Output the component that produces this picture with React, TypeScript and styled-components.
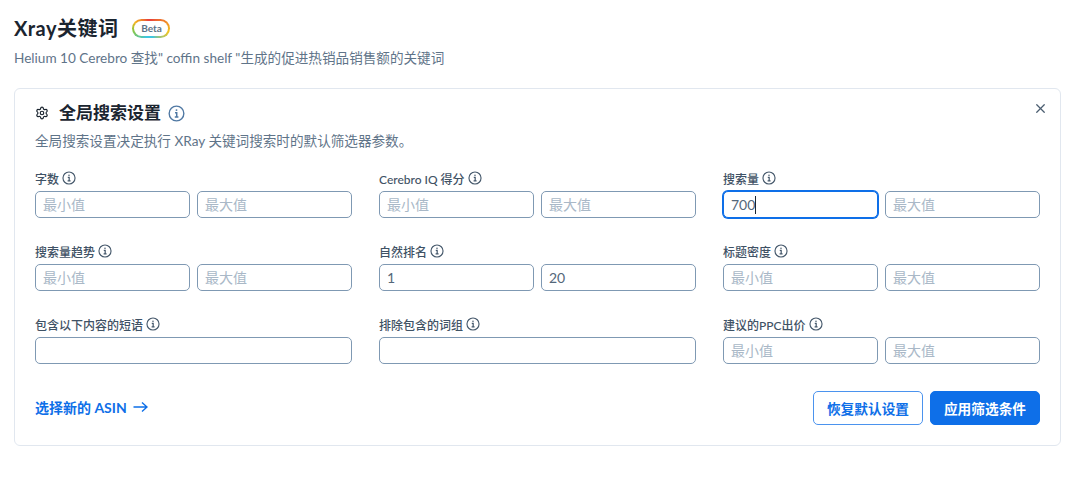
import styled, { createGlobalStyle } from "styled-components";
import { Settings, X } from "lucide-react";

const GlobalStyle = createGlobalStyle`
  * { box-sizing: border-box; }
  body {
    margin: 0;
    background: #fff;
    font-family: Lato, "Noto Sans CJK SC", sans-serif;
  }
`;

const Page = styled.div`
  width: 1080px;
  height: 486px;
  padding: 14px 19px 0 14px;
`;

const TitleRow = styled.div`
  display: flex;
  align-items: center;
  gap: 14px;
  height: 28px;
`;

const Title = styled.h1`
  margin: 0;
  font-size: 20px;
  line-height: 28px;
  font-weight: 700;
  letter-spacing: 0.5px;
  color: #1b2530;
`;

const Badge = styled.span`
  width: 38px;
  height: 19px;
  border-radius: 10px;
  padding: 2px;
  background: conic-gradient(#e8433a 0deg, #ef7d2a 60deg, #f3c41f 100deg, #3fc6e0 170deg, #3fc6e0 210deg, #8cc63f 265deg, #f3b51f 290deg, #e8433a 340deg);
  display: flex;
`;

const BadgeInner = styled.span`
  flex: 1;
  background: #fff;
  border-radius: 8px;
  font-size: 10px;
  font-weight: 700;
  line-height: 15px;
  text-align: center;
  color: #5b7288;
`;

const Subtitle = styled.p`
  margin: 6px 0 20px;
  font-size: 13.6px;
  line-height: 20px;
  color: #5f7489;
`;

const Card = styled.section`
  position: relative;
  height: 358px;
  border: 1px solid #e1e7ef;
  border-radius: 6px;
  padding: 12px 20px 0 20px;
`;

const CloseButton = styled.button`
  position: absolute;
  top: 11px;
  right: 12px;
  width: 16px;
  height: 16px;
  padding: 0;
  border: 0;
  background: none;
  color: #4a5d70;
  display: flex;
  align-items: center;
  justify-content: center;
`;

const CardHeading = styled.div`
  display: flex;
  align-items: center;
  height: 24px;
  color: #1b2530;
`;

const CardTitle = styled.h2`
  margin: 0 7px 0 10px;
  font-size: 17px;
  line-height: 24px;
  font-weight: 700;
`;

const CardNote = styled.p`
  margin: 6px 0 15px;
  font-size: 13.6px;
  line-height: 20px;
  color: #5f7489;
`;

const Grid = styled.div`
  display: grid;
  grid-template-columns: repeat(3, 317px);
  column-gap: 27px;
  row-gap: 21px;
`;

const Field = styled.div`
  display: flex;
  flex-direction: column;
`;

const Label = styled.label`
  display: flex;
  align-items: center;
  gap: 3px;
  height: 25px;
  padding-bottom: 1px;
  font-size: 12px;
  font-weight: 500;
  color: #3f5265;
`;

const Inputs = styled.div`
  display: flex;
  gap: 7px;
`;

const InputWrap = styled.div`
  position: relative;
  flex: 1;
`;

const Input = styled.input<{ $focused?: boolean }>`
  display: block;
  width: 100%;
  height: 27px;
  padding: 0 7px;
  border-radius: 5px;
  border: 1px solid ${(p) => (p.$focused ? "#0e6fe8" : "#7f99b3")};
  box-shadow: ${(p) => (p.$focused ? "0 0 0 1px #0e6fe8" : "none")};
  outline: none;
  background: #fff;
  font-family: inherit;
  font-size: 14px;
  color: #54677a;
  &::placeholder {
    color: #a9b8c7;
    opacity: 1;
  }
`;

const Caret = styled.span`
  position: absolute;
  left: 32px;
  top: 5px;
  width: 1px;
  height: 18px;
  background: #1b2530;
`;

const Footer = styled.div`
  display: flex;
  align-items: center;
  justify-content: space-between;
  margin-top: 27px;
`;

const NewAsin = styled.a`
  display: flex;
  align-items: center;
  gap: 6px;
  padding-bottom: 2px;
  font-size: 14px;
  font-weight: 700;
  color: #0e6fe8;
`;

const Actions = styled.div`
  display: flex;
  gap: 7px;
`;

const Button = styled.button<{ $primary?: boolean }>`
  width: 110px;
  height: 34px;
  padding: 0;
  border-radius: 5px;
  border: 1px solid ${(p) => (p.$primary ? "#0e6fe8" : "#4b93ee")};
  background: ${(p) => (p.$primary ? "#0e6fe8" : "#fff")};
  color: ${(p) => (p.$primary ? "#fff" : "#0e6fe8")};
  font-family: inherit;
  font-size: 13.7px;
  font-weight: 700;
`;

const InfoIcon = ({ size = 14, color = "#45586b" }: { size?: number; color?: string }) => (
  <svg width={size} height={size} viewBox="0 0 16 16" fill="none" stroke={color} strokeWidth="1.3">
    <circle cx="8" cy="8" r="6.9" />
    <path d="M6.6 7.2H8.2V11.4M6.4 11.4H9.8" strokeWidth="1.4" />
    <circle cx="8" cy="4.8" r="0.9" fill={color} stroke="none" />
  </svg>
);

const LongArrow = () => (
  <svg width="15" height="12" viewBox="0 0 15 12" fill="none" stroke="currentColor" strokeWidth="1.4">
    <path d="M0.5 6H14M9 1.5L14 6L9 10.5" />
  </svg>
);

type FieldDef = { label: string; values?: [string, string]; single?: boolean; focused?: boolean };

const fields: FieldDef[] = [
  { label: "字数" },
  { label: "Cerebro IQ 得分" },
  { label: "搜索量", values: ["700", ""], focused: true },
  { label: "搜索量趋势" },
  { label: "自然排名", values: ["1", "20"] },
  { label: "标题密度" },
  { label: "包含以下内容的短语", single: true },
  { label: "排除包含的词组", single: true },
  { label: "建议的PPC出价" },
];

const FilterField = ({ label, values, single, focused }: FieldDef) => (
  <Field>
    <Label>
      {label}
      <InfoIcon />
    </Label>
    <Inputs>
      {single ? (
        <InputWrap>
          <Input />
        </InputWrap>
      ) : (
        <>
          <InputWrap>
            <Input placeholder="最小值" defaultValue={values?.[0]} $focused={focused} />
            {focused && <Caret />}
          </InputWrap>
          <InputWrap>
            <Input placeholder="最大值" defaultValue={values?.[1]} />
          </InputWrap>
        </>
      )}
    </Inputs>
  </Field>
);

export default function App() {
  return (
    <Page>
      <GlobalStyle />
      <TitleRow>
        <Title>Xray关键词</Title>
        <Badge>
          <BadgeInner>Beta</BadgeInner>
        </Badge>
      </TitleRow>
      <Subtitle>Helium 10 Cerebro 查找" coffin shelf "生成的促进热销品销售额的关键词</Subtitle>
      <Card>
        <CloseButton>
          <X size={15} strokeWidth={2} />
        </CloseButton>
        <CardHeading>
          <Settings size={14} strokeWidth={2} />
          <CardTitle>全局搜索设置</CardTitle>
          <InfoIcon size={17} color="#4f78a3" />
        </CardHeading>
        <CardNote>全局搜索设置决定执行 XRay 关键词搜索时的默认筛选器参数。</CardNote>
        <Grid>
          {fields.map((f) => (
            <FilterField key={f.label} {...f} />
          ))}
        </Grid>
        <Footer>
          <NewAsin>
            选择新的 ASIN
            <LongArrow />
          </NewAsin>
          <Actions>
            <Button>恢复默认设置</Button>
            <Button $primary>应用筛选条件</Button>
          </Actions>
        </Footer>
      </Card>
    </Page>
  );
}
